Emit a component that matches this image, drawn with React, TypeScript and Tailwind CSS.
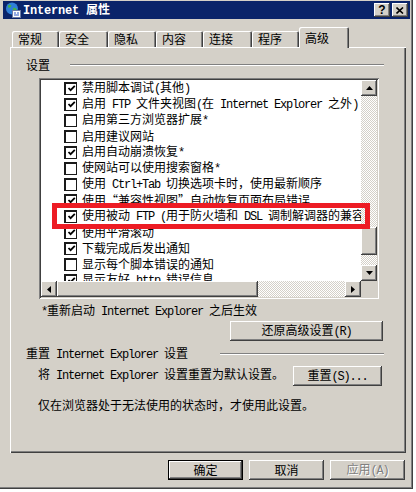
import React from "react";

const raised =
  "shadow-[inset_-1px_-1px_0_#404040,inset_1px_1px_0_#ffffff,inset_-2px_-2px_0_#808080,inset_2px_2px_0_#d4d0c8]";
const sunken =
  "shadow-[inset_1px_1px_0_#808080,inset_-1px_-1px_0_#ffffff,inset_2px_2px_0_#404040,inset_-2px_-2px_0_#d4d0c8]";
const checker =
  "bg-[repeating-conic-gradient(#d4d0c8_0_25%,#ffffff_0_50%)] bg-[length:2px_2px]";

// SimSun-like: latin runs are half width (6px per char)
function Mixed({ s }: { s: string }) {
  return (
    <>
      {s.split(/([\x20-\x7e]+)/).map((p, i) =>
        i % 2 ? (
          <span key={i} className="font-['Liberation_Mono',monospace] tracking-[-1.2px]">
            {p}
          </span>
        ) : (
          <React.Fragment key={i}>{p}</React.Fragment>
        )
      )}
    </>
  );
}

const items: [boolean, string][] = [
  [true, "禁用脚本调试(其他)"],
  [true, "启用 FTP 文件夹视图(在 Internet Explorer 之外)"],
  [false, "启用第三方浏览器扩展*"],
  [false, "启用建议网站"],
  [true, "启用自动崩溃恢复*"],
  [false, "使网站可以使用搜索窗格*"],
  [false, "使用 Ctrl+Tab 切换选项卡时，使用最新顺序"],
  [true, "使用“兼容性视图”自动恢复页面布局错误"],
  [true, "使用被动 FTP (用于防火墙和 DSL 调制解调器的兼容性)"],
  [true, "使用平滑滚动"],
  [true, "下载完成后发出通知"],
  [false, "显示每个脚本错误的通知"],
  [true, "显示友好 http 错误信息"],
];

const tabs: [string, number][] = [
  ["常规", 47],
  ["安全", 49],
  ["隐私", 48],
  ["内容", 47],
  ["连接", 49],
  ["程序", 47],
];

function Check({ on }: { on: boolean }) {
  return (
    <div className="w-[13px] h-[13px] shrink-0 border-2 border-[#1a1a1a] border-r border-b bg-white flex items-center justify-center">
      {on && (
        <svg width="9" height="9" viewBox="0 0 9 9">
          <path d="M1.5 4 L3.6 6.2 L7.8 1.8" fill="none" stroke="#000" strokeWidth="1.8" />
        </svg>
      )}
    </div>
  );
}

function Arrow({ dir }: { dir: "up" | "down" | "left" | "right" }) {
  const pts = {
    up: "0,4 7,4 3.5,0",
    down: "0,0 7,0 3.5,4",
    left: "4,0 4,7 0,3.5",
    right: "0,0 0,7 4,3.5",
  }[dir];
  const vert = dir === "up" || dir === "down";
  return (
    <div className={`w-[16px] h-[16px] shrink-0 bg-[#d4d0c8] ${raised} flex items-center justify-center`}>
      <svg width={vert ? 7 : 4} height={vert ? 4 : 7} viewBox={vert ? "0 0 7 4" : "0 0 4 7"}>
        <polygon points={pts} fill="#000" />
      </svg>
    </div>
  );
}

function Btn({ label, w, def, off }: { label: string; w: string; def?: boolean; off?: boolean }) {
  const shade = def
    ? "shadow-[inset_0_0_0_1px_#000000,inset_-2px_-2px_0_#404040,inset_2px_2px_0_#ffffff,inset_-3px_-3px_0_#808080]"
    : raised;
  return (
    <div
      className={`${w} h-[20px] bg-[#d4d0c8] ${shade} flex items-center justify-center ${
        off ? "text-[#808080] [text-shadow:1px_1px_0_#ffffff]" : "text-black"
      }`}
    >
      <span>
        <Mixed s={label} />
      </span>
    </div>
  );
}

function Globe() {
  return (
    <svg width="16" height="16" viewBox="0 0 16 16">
      <circle cx="7" cy="6.5" r="6" fill="#2f7fd8" />
      <path d="M3 3.5 Q5 2 6.5 3.5 Q6 5.5 4 6 Q2.5 5 3 3.5 Z" fill="#45b14a" />
      <path d="M8 6 Q11 5 12 7.5 Q10.5 10 9 9.5 Q7.5 8 8 6 Z" fill="#45b14a" />
      <rect x="7.5" y="8.5" width="8" height="7" fill="#ffffff" stroke="#6a7aa6" />
      <rect x="9" y="10.5" width="2" height="1" fill="#2a56c6" />
      <rect x="12" y="10.5" width="2" height="1" fill="#2a56c6" />
      <rect x="9" y="12.5" width="5" height="1" fill="#2a56c6" />
    </svg>
  );
}

export default function App() {
  return (
    <div className="w-[416px] h-[492px] bg-white overflow-hidden font-['Noto_Sans_CJK_SC',sans-serif] text-[12px] leading-[14px] text-black">
      <div className="w-[413px] h-[489px] bg-[#d4d0c8] shadow-[inset_-1px_-1px_0_#404040,inset_-2px_-2px_0_#808080] pt-[1px] pl-[3px] pr-[3px]">
        {/* title bar */}
        <div className="h-[18px] bg-[#0a246a] flex items-center pl-[2px] pr-[2px]">
          <Globe />
          <div className="ml-[2px] text-white font-bold whitespace-nowrap">
            <span className="font-['Liberation_Mono',monospace] tracking-[-0.2px]">Internet </span>
            属性
          </div>
          <div className="ml-auto flex gap-[2px]">
            <div className={`w-[16px] h-[14px] bg-[#d4d0c8] ${raised} flex items-center justify-center font-['Liberation_Sans',sans-serif] font-bold text-[12px] leading-[12px]`}>
              ?
            </div>
            <div className={`w-[16px] h-[14px] bg-[#d4d0c8] ${raised} flex items-center justify-center`}>
              <svg width="8" height="7" viewBox="0 0 8 7">
                <path d="M0.5 0.5 L7 6.5 M7 0.5 L0.5 6.5" stroke="#000" strokeWidth="1.6" />
              </svg>
            </div>
          </div>
        </div>

        {/* tabs */}
        <div className="mt-[8px] ml-[9px] h-[21px] -mb-px flex items-start">
          {tabs.map(([t, w]) => (
            <div
              key={t}
              style={{ width: w }}
              className="mt-[4px] h-[16px] pl-[6px] rounded-t-[2px] shadow-[inset_1px_1px_0_#ffffff,inset_-1px_0_0_#404040,inset_-2px_0_0_#808080] flex items-center"
            >
              {t}
            </div>
          ))}
          <div className="relative z-10 w-[50px] h-[21px] pl-[6px] pt-[4px] bg-[#d4d0c8] rounded-t-[2px] shadow-[inset_1px_1px_0_#ffffff,inset_-1px_0_0_#404040,inset_-2px_0_0_#808080]">
            高级
          </div>
        </div>

        {/* panel */}
        <div className="ml-[7px] w-[396px] h-[406px] shadow-[inset_1px_1px_0_#ffffff,inset_-1px_-1px_0_#404040,inset_-2px_-2px_0_#808080] pt-[11px]">
          <div className="ml-[16px] w-[358px] h-[14px] flex items-center">
            <span className="w-[44px]">设置</span>
            <div className="flex-1 h-[2px] border-t border-[#808080] border-b-white" style={{ borderBottomWidth: 1 }} />
          </div>

          {/* list box */}
          <div className={`relative mt-[6px] ml-[29px] w-[340px] h-[221px] p-[2px] bg-white ${sunken}`}>
            <div className="flex h-[201px]">
              <div className="w-[320px] h-[201px] overflow-hidden bg-white">
                {items.map(([on, s], i) => (
                  <div key={i} className="h-[16px] pl-[23px] flex items-center gap-[5px] whitespace-nowrap">
                    <Check on={on} />
                    <span>
                      <Mixed s={s} />
                    </span>
                  </div>
                ))}
              </div>
              <div className="w-[16px] flex flex-col">
                <Arrow dir="up" />
                <div className={`h-[131px] ${checker}`} />
                <div className={`h-[28px] bg-[#d4d0c8] ${raised}`} />
                <div className={`h-[10px] ${checker}`} />
                <Arrow dir="down" />
              </div>
            </div>
            <div className="flex h-[16px]">
              <Arrow dir="left" />
              <div className={`w-[201px] h-[16px] bg-[#d4d0c8] ${raised}`} />
              <div className={`w-[87px] h-[16px] ${checker}`} />
              <Arrow dir="right" />
              <div className="w-[16px] h-[16px] bg-[#d4d0c8]" />
            </div>
            <div className="absolute left-[13px] top-[125px] w-[318px] h-[26px] border-[5px] border-[#ed1c24]" />
          </div>

          <div className="mt-[4px] ml-[31px] whitespace-nowrap">
            <Mixed s="*重新启动 Internet Explorer 之后生效" />
          </div>
          <div className="mt-[2px] ml-[220px]">
            <Btn label="还原高级设置(R)" w="w-[153px]" />
          </div>

          <div className="mt-[6px] ml-[16px] w-[358px] h-[14px] flex items-center">
            <span className="w-[194px] whitespace-nowrap">
              <Mixed s="重置 Internet Explorer 设置" />
            </span>
            <div className="flex-1 h-[2px] border-t border-[#808080] border-b-white" style={{ borderBottomWidth: 1 }} />
          </div>

          <div className="mt-[5px] ml-[28px] flex items-start">
            <span className="w-[255px] whitespace-nowrap mt-[1px]">
              <Mixed s="将 Internet Explorer 设置重置为默认设置。" />
            </span>
            <Btn label="重置(S)..." w="w-[89px]" />
          </div>

          <div className="mt-[12px] ml-[28px] whitespace-nowrap">
            仅在浏览器处于无法使用的状态时，才使用此设置。
          </div>
        </div>

        {/* dialog buttons */}
        <div className="mt-[7px] ml-[165px] flex gap-[6px]">
          <Btn label="确定" w="w-[75px]" def />
          <Btn label="取消" w="w-[75px]" />
          <Btn label="应用(A)" w="w-[75px]" off />
        </div>
      </div>
    </div>
  );
}
